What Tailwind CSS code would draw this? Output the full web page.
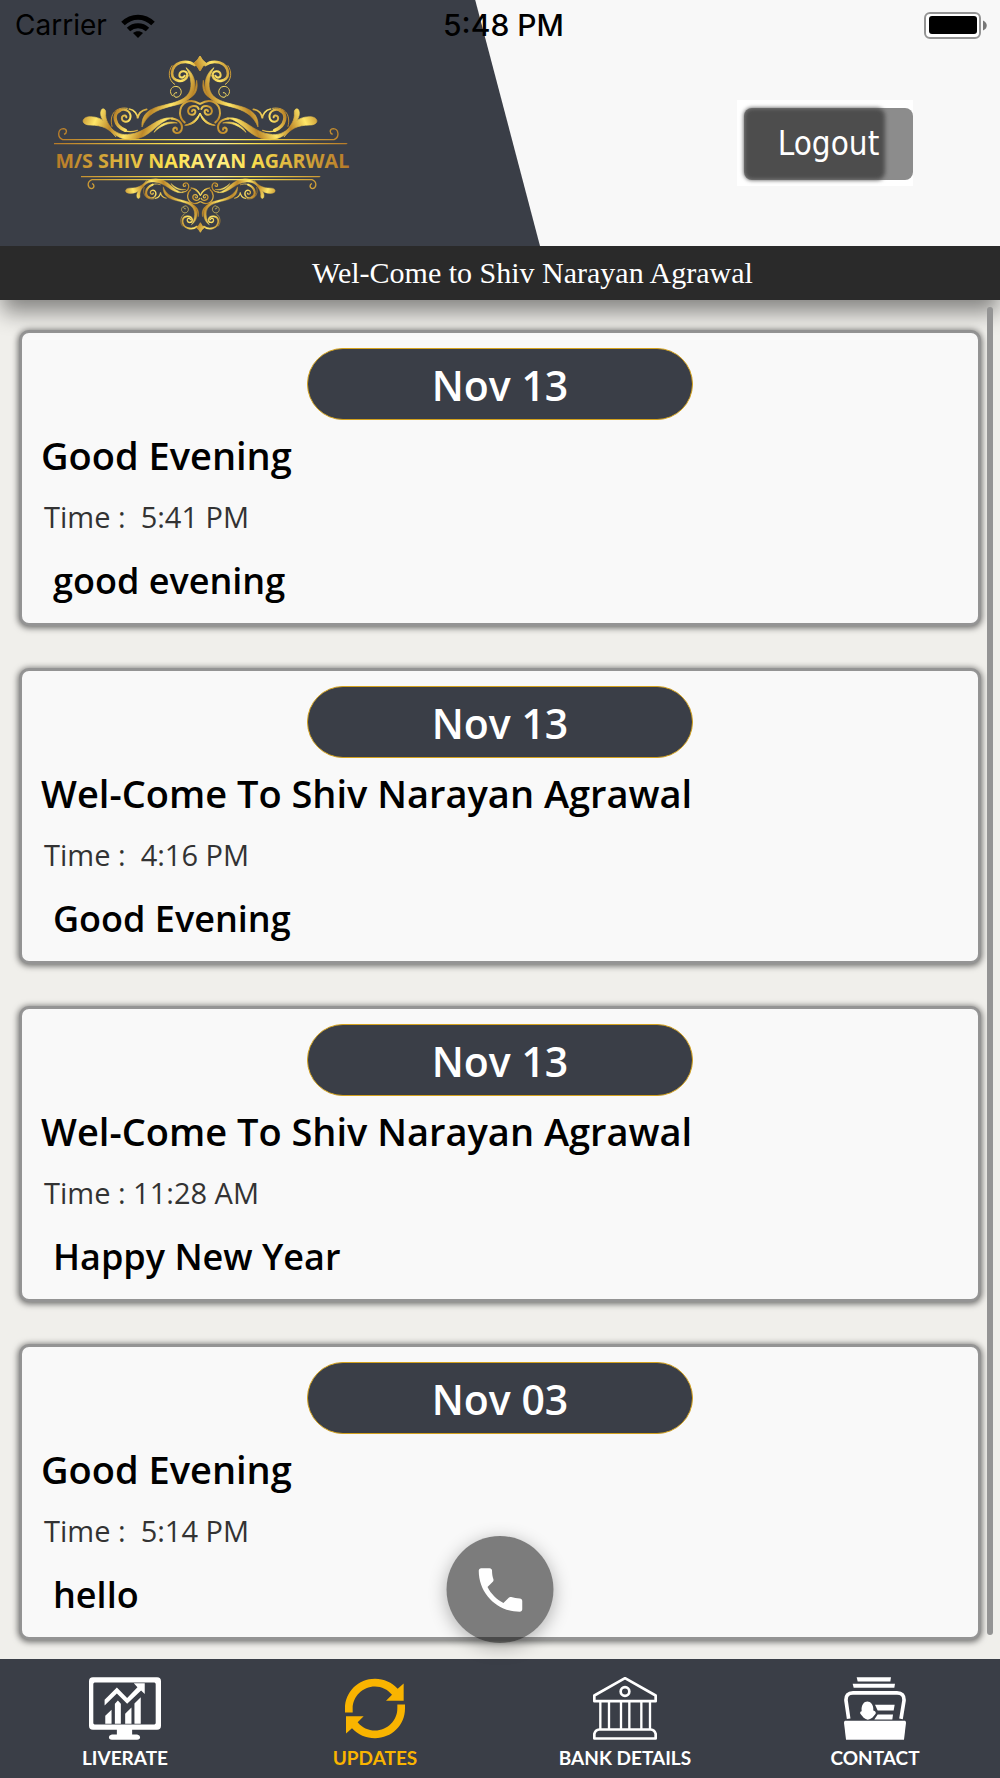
<!DOCTYPE html>
<html lang="en">
  <head>
    <meta charset="UTF-8" />
    <meta name="viewport" content="width=device-width, initial-scale=1.0" />
    <title>M/S Shiv Narayan Agarwal - Updates</title>
    <script src="https://cdn.jsdelivr.net/npm/@tailwindcss/browser@4"></script>
  </head>
  <body
    class="relative flex min-h-screen flex-col bg-[#f0efeb] font-['Open_Sans',sans-serif] text-black"
  >
    <header class="relative isolate z-10 bg-[#f8f8f8]">
      <div
        class="absolute inset-y-0 left-0 -z-10 w-[54%] bg-[#3a3e47] [clip-path:polygon(0_0,88%_0,100%_100%,0_100%)]"
      ></div>

      <!-- status bar -->
      <div
        class="grid h-[45px] grid-cols-3 items-center pl-[15px] pr-3 pt-[6px] font-['Inter',sans-serif] text-[28px] leading-[39px]"
      >
        <div class="flex items-center gap-[14px]">
          <span>Carrier</span>
          <svg class="h-6 w-[34px]" viewBox="0 0 34 24" fill="none" stroke="currentColor" stroke-width="5">
            <path d="M2 9.5C10.500 1 23.500 1 32 9.500" />
            <path d="M7.500 15.500C13 10.500 21 10.500 26.500 15.500" />
            <path d="M17 24l-5-5c3-2.500 7-2.500 10 0z" fill="currentColor" stroke="none" />
          </svg>
        </div>
        <span class="pl-1 text-center text-[30px] font-medium">5:48 PM</span>
        <svg class="h-[27px] w-16 justify-self-end" viewBox="0 0 64 27">
          <rect x="1" y="1" width="55" height="25" rx="5" fill="#fff" stroke="#949494" stroke-width="2" />
          <rect x="5" y="4" width="48" height="18" rx="3" />
          <path d="M59 8.500c5 2 5 8 0 10z" fill="#777" />
        </svg>
      </div>

      <div class="flex items-center justify-between pb-[6px] pl-10 pr-[87px]">
        <svg class="h-[195px] w-80" viewBox="0 0 960 585" role="img" aria-label="M/S Shiv Narayan Agarwal">
          <defs>
            <linearGradient id="gold" gradientUnits="userSpaceOnUse" x1="100" y1="0" x2="145" y2="18" spreadMethod="reflect">
              <stop offset="0" stop-color="#bd8729" />
              <stop offset="1" stop-color="#ffe768" />
            </linearGradient>
            <linearGradient id="gold-wide" gradientUnits="userSpaceOnUse" x1="45" y1="0" x2="925" y2="0">
              <stop offset="0" stop-color="#b67a28" />
              <stop offset="0.4" stop-color="#fbe250" />
              <stop offset="0.55" stop-color="#fff08a" />
              <stop offset="0.66" stop-color="#fbe250" />
              <stop offset="1" stop-color="#b67a28" />
            </linearGradient>
            <g id="half" fill="url(#gold)" stroke="url(#gold)" stroke-width="2">
              <path d="M480 33Q487 48 498 54Q487 64 480 78Q473 64 462 54Q473 48 480 33Z" />
              <path d="M438 68C470 90 478 145 436 170C405 188 330 182 306 246C303 205 332 190 366 182C408 171 455 165 453 115C452 95 446 80 438 68Z" />
              <path d="M470 106C475 130 468 150 448 160C462 146 468 130 470 106Z" />
              <path d="M228 276C205 250 190 241 150 240C122 240 122 215 152 215C190 217 210 238 228 276Z" />
              <path d="M226 264C196 240 175 215 184 195C188 188 198 192 197 203C195 225 207 242 226 264Z" />
              <path d="M200 236C222 262 240 270 262 269C325 264 345 212 400 219C350 225 335 282 272 284C238 284 215 265 200 236Z" />
              <path d="M342 262C355 238 385 225 412 234C385 232 362 242 342 262Z" />
              <path d="M480 204C476 226 460 240 434 241C458 235 470 222 480 204ZM480 204C486 226 500 240 524 241C502 235 490 222 480 204Z" />
              <g fill="none" stroke-linecap="round">
                <path stroke-width="8" d="M464 60C440 42 398 50 396 85C396 112 436 116 442 92" />
                <path stroke-width="6" d="M442 92C443 76 420 74 418 90C418 99 430 101 434 92" />
                <path stroke-width="3" d="M396 62C383 80 385 106 404 118" />
                <path stroke-width="3" d="M398 153C385 142 392 124 408 124C430 126 428 157 408 157C398 154 400 142 410 143" />
                <path stroke-width="6" d="M478 176C450 158 420 172 420 205C421 218 426 226 434 232" />
                <path stroke-width="6" d="M476 192C472 178 446 180 444 198C446 214 468 212 466 198C464 192 456 194 456 199" />
                <path stroke-width="6" d="M395 221C420 222 430 240 424 256C416 270 398 264 400 252C404 245 412 248 411 254" />
                <path stroke-width="10" d="M256 256C222 244 216 205 240 196" />
                <path stroke-width="6" d="M240 196C262 188 276 206 270 222C262 236 242 230 246 216C250 209 260 211 259 217" />
                <path stroke-width="4" d="M240 246C255 262 275 262 292 256" />
                <path stroke-width="3" d="M262 190C230 184 206 206 216 244" />
                <path stroke-width="5" d="M268 192C284 194 292 208 293 220C295 206 304 196 320 193" />
              </g>
            </g>
            <g id="ornament">
              <use href="#half" />
              <use href="#half" transform="matrix(-1 0 0 1 960 0)" />
            </g>
          </defs>
          <use href="#ornament" />
          <use href="#ornament" transform="matrix(.64 0 0 -.64 174 583)" />
          <g fill="none" stroke="url(#gold-wide)" stroke-width="4">
            <path d="M72 268C82 264 82 252 70 251C54 252 50 276 68 284H882C900 276 896 252 880 251C868 252 868 264 878 268" />
            <path d="M42 296H920V296.100" />
            <path d="M123 395H839V395.100" />
            <path d="M156 416C164 418 164 430 154 431C142 428 140 410 156 404H816C832 410 830 428 818 431C808 430 808 418 816 416" />
          </g>
          <text x="487" y="368" text-anchor="middle" font-family="Open Sans, sans-serif" font-size="59" font-weight="700" fill="url(#gold-wide)">M/S SHIV NARAYAN AGARWAL</text>
        </svg>

        <div class="bg-white pb-[6px] pl-[7px] pt-2">
          <button
            type="button"
            class="relative isolate h-[72px] w-[169px] rounded-lg bg-[#8c8c8c] font-['DejaVu_Sans_Condensed','DejaVu_Sans',sans-serif] text-[33px] leading-[68px] text-white"
          >
            <span class="absolute inset-y-0 left-0 right-7 -z-10 rounded-lg bg-[#4d4d4d] blur-[2px]"></span>
            Logout
          </button>
        </div>
      </div>
    </header>

    <div
      class="relative bg-[#2a2a2a] py-2 pl-[312px] font-['Liberation_Serif',serif] text-[30px] leading-[38px] text-white shadow-[0_14px_22px_-2px_rgba(0,0,0,0.45)]"
    >
      Wel-Come to Shiv Narayan Agrawal
    </div>

    <main class="flex grow flex-col gap-[42px] px-[19px] pt-[30px]">
      <article class="rounded-[10px] border-3 border-[#949494] bg-[#f9f9f9] px-[19px] pb-[17px] pt-[15px] shadow-[0_1px_6px_1px_rgba(0,0,0,0.55)]">
        <div class="mx-auto w-[386px] max-w-full rounded-full border border-[#d3a11d] bg-[#3a3e47] pt-[2px] text-center text-[41px] font-semibold leading-[68px] text-white">Nov 13</div>
        <h2 class="mt-[9px] text-[38px] font-semibold leading-[52px]">Good Evening</h2>
        <p class="mt-4 whitespace-pre pl-[3px] text-[29px] leading-10 text-[#333]">Time :  5:41 PM</p>
        <p class="mt-[19px] pl-3 text-[36px] font-semibold leading-[50px]">good evening</p>
      </article>

      <article class="rounded-[10px] border-3 border-[#949494] bg-[#f9f9f9] px-[19px] pb-[17px] pt-[15px] shadow-[0_1px_6px_1px_rgba(0,0,0,0.55)]">
        <div class="mx-auto w-[386px] max-w-full rounded-full border border-[#d3a11d] bg-[#3a3e47] pt-[2px] text-center text-[41px] font-semibold leading-[68px] text-white">Nov 13</div>
        <h2 class="mt-[9px] text-[38px] font-semibold leading-[52px]">Wel-Come To Shiv Narayan Agrawal</h2>
        <p class="mt-4 whitespace-pre pl-[3px] text-[29px] leading-10 text-[#333]">Time :  4:16 PM</p>
        <p class="mt-[19px] pl-3 text-[36px] font-semibold leading-[50px]">Good Evening</p>
      </article>

      <article class="rounded-[10px] border-3 border-[#949494] bg-[#f9f9f9] px-[19px] pb-[17px] pt-[15px] shadow-[0_1px_6px_1px_rgba(0,0,0,0.55)]">
        <div class="mx-auto w-[386px] max-w-full rounded-full border border-[#d3a11d] bg-[#3a3e47] pt-[2px] text-center text-[41px] font-semibold leading-[68px] text-white">Nov 13</div>
        <h2 class="mt-[9px] text-[38px] font-semibold leading-[52px]">Wel-Come To Shiv Narayan Agrawal</h2>
        <p class="mt-4 whitespace-pre pl-[3px] text-[29px] leading-10 text-[#333]">Time : 11:28 AM</p>
        <p class="mt-[19px] pl-3 text-[36px] font-semibold leading-[50px]">Happy New Year</p>
      </article>

      <article class="rounded-[10px] border-3 border-[#949494] bg-[#f9f9f9] px-[19px] pb-[17px] pt-[15px] shadow-[0_1px_6px_1px_rgba(0,0,0,0.55)]">
        <div class="mx-auto w-[386px] max-w-full rounded-full border border-[#d3a11d] bg-[#3a3e47] pt-[2px] text-center text-[41px] font-semibold leading-[68px] text-white">Nov 03</div>
        <h2 class="mt-[9px] text-[38px] font-semibold leading-[52px]">Good Evening</h2>
        <p class="mt-4 whitespace-pre pl-[3px] text-[29px] leading-10 text-[#333]">Time :  5:14 PM</p>
        <p class="mt-[19px] pl-3 text-[36px] font-semibold leading-[50px]">hello</p>
      </article>
    </main>

    <!-- scroll indicator -->
    <div class="absolute bottom-[143px] right-[7px] top-[307px] w-[6px] rounded-full bg-[#949494]"></div>

    <button
      type="button"
      aria-label="Call"
      class="absolute bottom-[135px] left-1/2 flex size-[107px] -translate-x-1/2 items-center justify-center rounded-full bg-black/50 text-white shadow-[0_4px_18px_rgba(0,0,0,0.3)]"
    >
      <svg class="size-[58px]" viewBox="0 0 24 24" fill="currentColor">
        <path d="M6.620 10.790c1.440 2.830 3.760 5.140 6.590 6.590l2.200-2.200c.270-.270.670-.360 1.020-.240 1.120.370 2.330.570 3.570.570.550 0 1 .450 1 1V20c0 .550-.450 1-1 1-9.390 0-17-7.610-17-17 0-.550.450-1 1-1h3.500c.550 0 1 .450 1 1 0 1.250.200 2.450.570 3.570.110.350.030.740-.250 1.020l-2.200 2.200z" />
      </svg>
    </button>

    <nav
      class="grid grid-cols-4 bg-[#3a3e47] pb-[7px] pt-[18px] text-center font-['Lato',sans-serif] text-[19px] font-bold leading-[27px] text-white"
    >
      <a href="#" class="flex flex-col items-center gap-1">
        <svg class="h-[63px] w-[72px]" viewBox="267 82 217 188" fill="currentColor">
          <path fill-rule="evenodd" d="M279 82H472Q484 82 484 94V228Q484 240 472 240H397V254H412Q421 256 421 262Q421 270 412 270H336Q327 270 327 262Q327 256 336 254H351V240H279Q267 240 267 228V94Q267 82 279 82ZM284 98Q280 98 280 103V220Q280 224 284 224H464Q468 224 468 220V103Q468 98 464 98Z" />
          <path d="M314 150L351 113L382 144L413 112L402 100H435V132L424 122L382 162L351 131L314 167Z" />
          <path d="M316 198L335 180V222H316ZM345 162L354 152L363 162V222H345ZM376 192L395 173V222H376ZM404 161L423 142V222H404Z" />
        </svg>
        LIVERATE
      </a>
      <a href="#" class="flex flex-col items-center gap-1 text-[#f9b400]" aria-current="page">
        <svg class="h-[63px] w-[62px]" viewBox="1032 82 186 188" fill="currentColor">
          <path d="M1035 188V176C1035 126 1075 87 1125 87C1152 87 1176 98 1193 117L1211 101V153H1158L1176 135C1163 119 1145 110 1125 110C1088 110 1058 140 1058 176V188Z" />
          <path d="M1215 164V176C1215 226 1175 265 1125 265C1098 265 1074 254 1056 235L1038 251V199H1091L1073 217C1086 233 1105 242 1125 242C1162 242 1192 212 1192 176V164Z" />
        </svg>
        UPDATES
      </a>
      <a href="#" class="flex flex-col items-center gap-1">
        <svg class="h-[63px] w-[64px]" viewBox="277 82 192 188" fill="none" stroke="currentColor" stroke-width="8">
          <path stroke-linejoin="round" d="M281 137L373 85L465 137V154H281Z" />
          <circle cx="373" cy="125" r="13" />
          <path d="M299 156V238M325 156V238M361 156V238M386 156V238M422 156V238M448 156V238" stroke-width="7" />
          <path stroke-linejoin="round" d="M281 266V252Q284 240 296 239H450Q462 240 465 252V266Z" />
        </svg>
        BANK DETAILS
      </a>
      <a href="#" class="flex flex-col items-center gap-1">
        <svg class="h-[63px] w-[62px]" viewBox="1029 82 186 188" fill="currentColor">
          <path d="M1067 82H1170L1168 95H1070ZM1055 102H1182L1180 114H1058Z" />
          <path fill="none" stroke="currentColor" stroke-width="11" d="M1043 207L1035 152Q1034 129 1056 129H1188Q1210 129 1209 152L1200 207" />
          <path d="M1082 184C1078 146 1119 146 1117 182Q1126 184 1124 192L1114 204Q1100 215 1088 204L1078 192Q1076 184 1082 184Z" />
          <path d="M1122 165H1181L1178 182H1130ZM1130 194H1176L1174 209H1120Z" />
          <path d="M1032 213H1212Q1215 214 1215 219L1209 270H1035L1029 219Q1029 214 1032 213Z" />
        </svg>
        CONTACT
      </a>
    </nav>
  </body>
</html>
